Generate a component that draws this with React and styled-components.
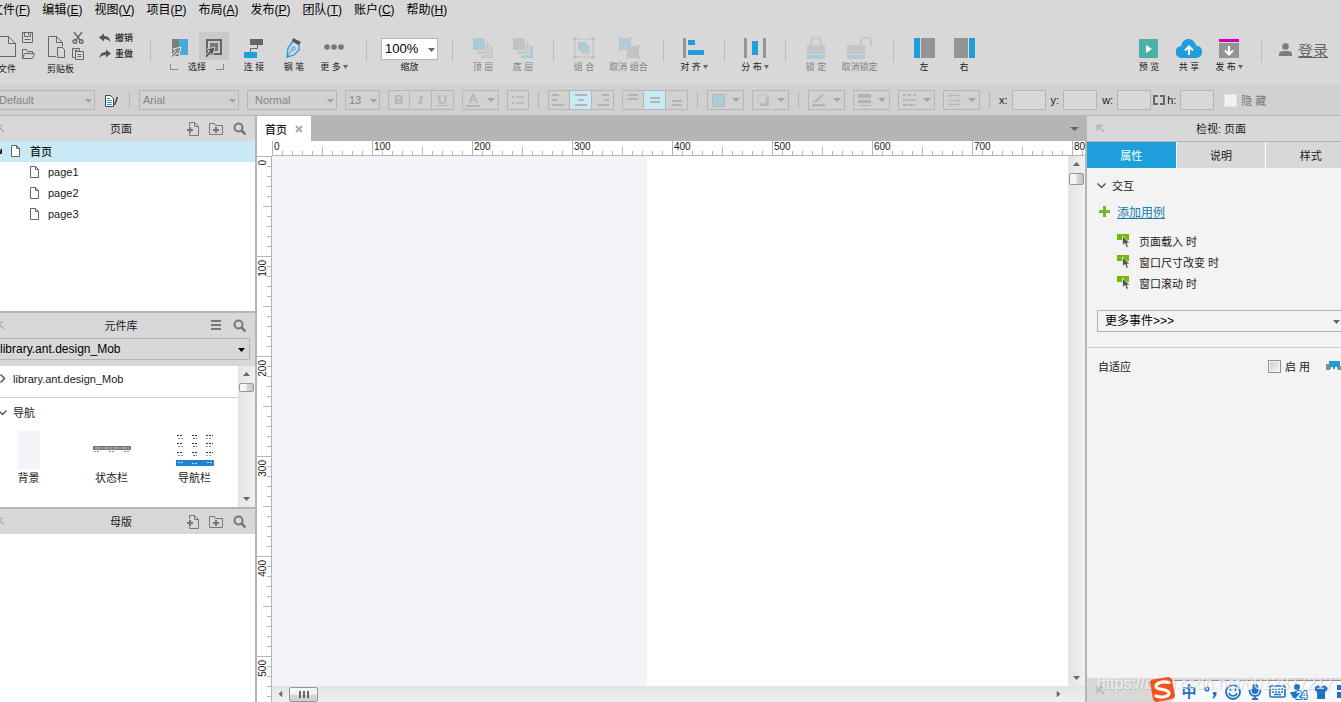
import { useLayoutEffect, useRef, useState } from "react"
import styled, { createGlobalStyle, css } from "styled-components"

const GlobalStyle = createGlobalStyle`
  * {
    box-sizing: border-box;
  }

  body {
    margin: 0;
    overflow: hidden;
    color: #1a1a1a;
    background: #d8d8d8;
    font-family: "Liberation Sans", "Noto Sans CJK SC", sans-serif;
    font-size: 11px;
  }

  button,
  input,
  select {
    margin: 0;
    padding: 0;
    border: 0;
    border-radius: 0;
    background: none;
    color: inherit;
    font: inherit;
  }

  svg {
    display: block;
    flex: none;
  }
`

const line = "#b5b5b5"
const blue = "#1e9fdb"
const grey = "#666"

const App = styled.div`
  display: flex;
  flex-direction: column;
  height: 100vh;
  overflow: hidden;
`

/* ---------- menu ---------- */

const MenuBar = styled.nav`
  display: flex;
  flex: none;
  gap: 12px;
  height: 20px;
  margin-left: -9px;
  font-size: 12px;
  line-height: 20px;
  color: #000;
`

const MenuItem = styled.button`
  white-space: nowrap;
`

/* ---------- main toolbar ---------- */

const Toolbar = styled.div`
  display: flex;
  flex: none;
  align-items: flex-start;
  height: 65px;
  padding-top: 12px;
  margin-left: -6px;
  font-size: 9px;
`

const Group = styled.div`
  display: flex;
  flex: none;
  padding: ${(p) => p.$pad || "0"};
`

const Divider = styled.div`
  flex: none;
  width: 1px;
  height: 22px;
  margin: 8px 10px 0;
  background: #bcbcbc;
`

const ToolButton = styled.button`
  display: flex;
  flex: none;
  flex-direction: column;
  align-items: center;
  width: ${(p) => p.$w || 40}px;
  line-height: 14px;
  white-space: nowrap;
  color: ${(p) => (p.disabled ? "#808080" : "#1a1a1a")};
`

const IconBox = styled.span`
  display: flex;
  align-items: center;
  justify-content: center;
  width: 30px;
  height: 28px;
  padding-top: 4px;
`

const ToolLabel = styled.span`
  display: flex;
  align-items: center;
  justify-content: ${(p) => (p.$spread ? "space-between" : "center")};
  gap: 2px;
  line-height: 14px;
  padding: ${(p) => (p.$spread ? "0 5px" : "0")};
`

const Cluster = styled.div`
  display: flex;
  flex-direction: column;
  gap: 2px;
  margin-right: ${(p) => p.$after}px;
  line-height: 14px;
`

const ClusterRow = styled.div`
  display: flex;
  align-items: center;
  gap: 6px;
  height: 28px;
`

const ClusterLabel = styled.span`
  padding-left: ${(p) => (p.$indent ? 4 : 0)}px;
`

const Stack = styled.div`
  display: flex;
  flex-direction: column;
  justify-content: space-between;
  height: 28px;
`

const HistoryButton = styled.button`
  display: flex;
  align-items: center;
  gap: 4px;
  height: 12px;
  line-height: 12px;
  font-weight: 500;
`

const ModeButton = styled.button`
  display: flex;
  align-items: center;
  justify-content: center;
  width: 30px;
  height: 28px;
  padding-top: 4px;
  background: ${(p) => (p.$active ? "#c9c9c9" : "none")};
`

const ModeRow = styled.div`
  display: flex;
  gap: 4px;
`

const ZoomBox = styled.label`
  display: flex;
  flex-direction: column;
  align-items: center;
  padding-top: 6px;
  line-height: 14px;
`

const Spacer = styled.div`
  flex: 1;
`

const Login = styled.a`
  display: flex;
  align-items: center;
  gap: 6px;
  height: 34px;
  padding: 0 13px 0 7px;
  font-size: 15px;
  color: ${grey};
`

/* ---------- selects ---------- */

const SelectWrap = styled.span`
  position: relative;
  display: block;
  flex: none;
  width: ${(p) => (p.$w ? `${p.$w}px` : "auto")};

  svg {
    position: absolute;
    right: ${(p) => p.$caretRight || 3}px;
    top: 50%;
    margin-top: -1px;
    pointer-events: none;
  }
`

const SelectField = styled.select`
  display: block;
  appearance: none;
  width: 100%;
  height: ${(p) => p.$h || 20}px;
  padding: 0 ${(p) => p.$pad || 3}px;
  border: 1px solid ${line};
  background: ${(p) => p.$bg || "transparent"};
  color: ${(p) => p.$color || "#000"};
  font-size: ${(p) => p.$size || 11}px;
`

const Caret = ({ color = "#666", w = 7 }) => (
  <svg width={w} height="4" viewBox="0 0 7 4" preserveAspectRatio="none">
    <path d="M0 0h7L3.5 4z" fill={color} />
  </svg>
)

function Select({ label, value, w, caret, caretRight, ...rest }) {
  return (
    <SelectWrap $w={w} $caretRight={caretRight}>
      <SelectField aria-label={label} defaultValue={value} {...rest}>
        <option>{value}</option>
      </SelectField>
      <Caret color={caret} />
    </SelectWrap>
  )
}

/* ---------- format bar ---------- */

const FormatBar = styled.div`
  display: flex;
  flex: none;
  align-items: center;
  gap: 8px;
  height: 31px;
  padding-right: 8px;
  margin-left: -8px;
  background: #d1d1d1;
  border-bottom: 1px solid ${line};
`

const FormatDivider = styled.div`
  flex: none;
  width: 1px;
  height: 18px;
  margin: 0 1px;
  background: ${line};
`

const SegButton = styled.button`
  display: flex;
  align-items: center;
  justify-content: space-around;
  width: ${(p) => p.$w || 20}px;
  height: 18px;
  background: ${(p) => (p.$active ? "#c9e9f6" : "transparent")};
`

const Segments = styled.div`
  display: flex;
  flex: none;
  border: 1px solid ${line};

  ${SegButton} + ${SegButton} {
    width: 22px;
    border-left: 1px solid ${line};
  }
`

const StyleButton = styled.button`
  padding: 0 2px;
`

const Coord = styled.label`
  display: flex;
  flex: none;
  align-items: center;
  gap: 4px;
  font-size: 11px;

  input {
    width: 34px;
    height: 20px;
    border: 1px solid ${line};
    background: #d8d8d8;
  }
`

const Coords = styled.div`
  display: flex;
  align-items: center;
  gap: ${(p) => p.$gap}px;
`

const Check = styled.label`
  display: flex;
  align-items: center;
  gap: 4px;
  padding-left: ${(p) => (p.$muted ? 2 : 0)}px;
  font-size: 11px;
  color: ${(p) => (p.$muted ? "#777" : "#1a1a1a")};

  input {
    appearance: none;
    width: 13px;
    height: 13px;
    border: 1px solid ${(p) => (p.$muted ? "#e2e2e2" : "#8e8f8f")};
    background: ${(p) =>
      p.$muted ? "#f2f2f2" : "linear-gradient(135deg, #c8ccd4, #f6f6f6)"};
    box-shadow: inset 0 0 0 1px #f4f4f4;
  }
`

/* ---------- body ---------- */

const Body = styled.main`
  display: flex;
  flex: 1;
  min-height: 0;
`

const LeftDock = styled.aside`
  display: flex;
  flex: none;
  flex-direction: column;
  width: 270px;
  margin-left: -13px;
  border-right: 2px solid ${line};
  background: #fff;
`

const Panel = styled.section`
  display: flex;
  flex-direction: column;
  flex: ${(p) => (p.$h ? "none" : "1")};
  height: ${(p) => (p.$h ? `${p.$h}px` : "auto")};
  border-bottom: ${(p) => (p.$h ? `2px solid ${line}` : "0")};
`

const PanelHeader = styled.header`
  display: grid;
  flex: none;
  grid-template-columns: 1fr auto 1fr;
  align-items: center;
  height: 25px;
  padding: 0 9px;
  background: #d8d8d8;
  line-height: 16px;
`

const HeaderTools = styled.div`
  display: flex;
  justify-content: flex-end;
  gap: 10px;
`

const Tree = styled.ul`
  margin: 0;
  padding: 0;
  list-style: none;
`

const TreeRow = styled.li`
  display: flex;
  align-items: center;
  gap: ${(p) => (p.$root ? 9 : 8)}px;
  height: 21px;
  padding: 0 0 2px ${(p) => (p.$root ? 10 : 43)}px;
  font-weight: ${(p) => (p.$root ? 500 : 400)};
  background: ${(p) => (p.$root ? "#c9e9f6" : "#fff")};
`

const LibrarySelect = styled.div`
  padding: 0 5px 6px 11px;
  background: #d8d8d8;
`

const LibraryBody = styled.div`
  display: flex;
  flex: 1;
  min-height: 0;
`

const LibraryList = styled.div`
  flex: 1;
`

const Folder = styled.div`
  display: flex;
  align-items: center;
  gap: 6px;
  height: ${(p) => (p.$closed ? 32 : 28)}px;
  padding: 0 0 ${(p) => (p.$closed ? 6 : 0)}px 11px;
  border-bottom: ${(p) => (p.$closed ? "1px solid #d0d0d0" : "0")};
`

const Thumbs = styled.div`
  display: grid;
  grid-template-columns: repeat(3, 83px);
  padding-top: 5px;
`

const Thumb = styled.figure`
  display: flex;
  flex-direction: column;
  align-items: center;
  gap: 1px;
  margin: 0;
  line-height: 16px;
`

/* ---------- scrollbars ---------- */

const VScroll = styled.div`
  display: flex;
  flex: none;
  flex-direction: column;
  align-items: center;
  width: 17px;
  padding: 6px 0;
  background: linear-gradient(90deg, #e4e4e4, #f0f0f0);
`

const HScroll = styled.div`
  display: flex;
  flex: none;
  align-items: center;
  height: 16px;
  padding: 0 23px 0 5px;
  background: linear-gradient(#e4e4e4, #f0f0f0);
`

const Thumbpiece = styled.div`
  display: flex;
  align-items: center;
  justify-content: center;
  gap: 2px;
  width: ${(p) => p.$w}px;
  height: ${(p) => p.$h}px;
  margin: ${(p) => p.$margin};
  border: 1px solid #979797;
  border-radius: 2px;
  background: ${(p) =>
    p.$w > 20
      ? "linear-gradient(#f5f5f5 45%, #d6d6d6 55%, #cfcfcf)"
      : "linear-gradient(90deg, #f5f5f5 45%, #d6d6d6 55%, #c4c6cc)"};

  i {
    width: 2px;
    height: 7px;
    background: #666;
  }
`

const Arrow = ({ turn }) => (
  <svg width="7" height="4" viewBox="0 0 7 4" transform={`rotate(${turn})`}>
    <path d="M0 4 3.5 0 7 4z" fill="#666" />
  </svg>
)

/* ---------- canvas ---------- */

const Workspace = styled.section`
  display: flex;
  flex: 1;
  flex-direction: column;
  min-width: 0;
  background: #fff;
`

const TabStrip = styled.div`
  display: flex;
  flex: none;
  align-items: center;
  justify-content: space-between;
  height: 25px;
  padding-right: 6px;
  background: ${line};
`

const PageTab = styled.button`
  display: flex;
  align-items: center;
  gap: 8px;
  height: 25px;
  padding: 0 8px;
  background: #fff;
  font-weight: 500;
`

const ticks = (dir) => css`
  background-image: linear-gradient(${dir}, #b5b5b5, #b5b5b5),
    linear-gradient(${dir}, #b5b5b5, #b5b5b5),
    repeating-linear-gradient(${dir}, #b5b5b5 0 1px, transparent 1px 10px);
  background-repeat: no-repeat;
`

const TopRuler = styled.div`
  display: flex;
  flex: none;
  height: 15px;
  margin-left: 15px;
  overflow: hidden;
  border-bottom: 1px solid ${line};
`

const TopSegment = styled.div`
  ${ticks("90deg")}
  flex: none;
  width: 100px;
  padding-left: 2px;
  font-size: 10px;
  line-height: 12px;
  background-size: 1px 14px, 1px 8px, 100px 4px;
  background-position: 0 0, 50px 6px, 0 10px;
`

const SideRuler = styled.div`
  flex: none;
  width: 15px;
  overflow: hidden;
  border-right: 1px solid ${line};
`

const SideSegment = styled.div`
  ${ticks("180deg")}
  height: 100px;
  padding-top: 4px;
  background-size: 14px 1px, 8px 1px, 4px 100px;
  background-position: 0 0, 6px 50px, 10px 0;

  span {
    display: block;
    writing-mode: vertical-rl;
    transform: rotate(180deg);
    width: 12px;
    font-size: 10px;
    line-height: 12px;
    text-align: right;
  }
`

const CanvasRow = styled.div`
  display: flex;
  flex: 1;
  min-height: 0;
`

const CanvasColumn = styled.div`
  display: flex;
  flex: 1;
  flex-direction: column;
  min-width: 0;
`

const CanvasView = styled.div`
  display: flex;
  flex: 1;
  min-height: 0;
`

const Sheet = styled.div`
  flex: 1;
  background: #fff;

  div {
    width: 375px;
    height: 100%;
    background: #f4f3f9;
  }
`

/* ---------- inspector ---------- */

const Inspector = styled.aside`
  position: relative;
  display: flex;
  flex: none;
  flex-direction: column;
  width: 256px;
  overflow: hidden;
  border-left: 2px solid ${line};
  background: #f3f3f3;
`

const Wide = styled.div`
  display: flex;
  flex: 1;
  flex-direction: column;
  margin-right: -14px;
`

const Tabs = styled.div`
  display: grid;
  grid-template-columns: repeat(3, 1fr);
  gap: 1px;
  height: 27px;
  border-top: 1px solid ${line};
  background: #fff;
`

const Tab = styled.button`
  color: ${(p) => (p.$active ? "#fff" : "#1a1a1a")};
  background: ${(p) => (p.$active ? blue : "#d8d8d8")};
`

const Interactions = styled.div`
  padding: 9px 0 15px 10px;
  border-bottom: 1px solid #cfcfcf;
`

const SectionTitle = styled.div`
  display: flex;
  align-items: center;
  gap: 6px;
  height: 16px;
`

const AddCase = styled.div`
  display: flex;
  align-items: center;
  gap: 7px;
  height: 20px;
  margin: 8px 0 9px 2px;
  font-size: 12px;

  a {
    color: #1580b0;
  }
`

const EventList = styled.ul`
  margin: 0 0 17px;
  padding: 0 0 0 20px;
  list-style: none;

  li {
    display: flex;
    align-items: center;
    gap: 9px;
    height: 21px;
  }
`

const Adaptive = styled.div`
  display: flex;
  align-items: center;
  justify-content: space-between;
  height: 36px;
  padding: 0 9px 0 11px;
`

const AdaptiveTools = styled.div`
  display: flex;
  align-items: center;
  gap: 16px;
`

const Outline = styled.footer`
  display: flex;
  align-items: center;
  height: 24px;
  margin-top: auto;
  padding-left: 9px;
  background: #d8d8d8;
`

const ImeBar = styled.div`
  position: absolute;
  right: 0;
  bottom: 0;
  left: 62px;
  display: flex;
  align-items: flex-end;
  overflow: hidden;
`

const ImeLogo = styled.button`
  position: relative;
  z-index: 1;
`

const ImeTools = styled.div`
  display: flex;
  flex: 1;
  height: 22px;
  margin-left: -6px;
  padding-left: 7px;
  border-top: 1px solid #8d8d9c;
  background: #fafafc;
  color: #1f74c8;
  overflow: hidden;
`

const ImeButton = styled.button`
  display: flex;
  flex: none;
  align-items: center;
  justify-content: center;
  width: 22px;
  height: 21px;
  font-size: 15px;
  font-weight: 700;
  line-height: 20px;
`

const Watermark = styled.div`
  position: absolute;
  left: 10px;
  bottom: 8px;
  font-size: 16px;
  line-height: 20px;
  white-space: nowrap;
  color: rgba(255, 255, 255, 0.7);
  text-shadow: 1px 1px 1px rgba(120, 120, 120, 0.3);
  pointer-events: none;
`

/* ---------- icons ---------- */

const Svg = ({ w, h = w, children, ...rest }) => (
  <svg width={w} height={h} viewBox={`0 0 ${w} ${h}`} fill="none" {...rest}>
    {children}
  </svg>
)

const NewFileIcon = () => (
  <Svg w={22} h={24} stroke={grey}>
    <path d="M.5 2.500h14l7 7v13H.5zM14.500 2.500v7h7" />
  </Svg>
)

const SaveIcon = () => (
  <Svg w={13} h={12} stroke={grey}>
    <path d="M.5.5h10v10H.5zM2.500.500v4h6v-4M2.500 7.500h6M6.500 1v2" />
  </Svg>
)

const OpenIcon = () => (
  <Svg w={13} h={12} stroke={grey}>
    <path d="M.5 10.500v-9h4l1 2h5v2M.5 10.500l2-5h10l-2 5z" />
  </Svg>
)

const PasteIcon = () => (
  <Svg w={19} h={24} stroke={grey}>
    <path d="M9 22.500H1.500v-20h8l6 6v4M9.500 2.500v6h6" />
    <path d="M10.500 13.500h5l2 2v8h-7z" />
  </Svg>
)

const CutIcon = () => (
  <Svg w={12} stroke={grey} strokeWidth="1.400">
    <path d="m2 0 6 8M10 0 4 8" />
    <circle cx="2.800" cy="9.500" r="1.800" />
    <circle cx="9.200" cy="9.500" r="1.800" />
  </Svg>
)

const CopyIcon = () => (
  <Svg w={12} stroke={grey}>
    <path d="M4 9.500H.5v-9h7V3M3.500 3.500h8v8h-8zM5.500 6.500h4M5.500 8.500h4M2.500 2.500h3" />
  </Svg>
)

const UndoIcon = ({ flip }) => (
  <Svg w={12} h={10}>
    <path
      d={
        flip
          ? "M12 4.500 7 .5V3C3 3 1 5 .5 9 2 7 4 6 7 6v2.500z"
          : "M0 4.500 5 .5V3c4 0 6 2 6.500 6C10 7 8 6 5 6v2.500z"
      }
      fill="#555"
    />
  </Svg>
)

const Pointer = ({ light }) => (
  <path
    d="m0 17 4.500-5L2 10l8-2-2 8-2-2-4.500 5z"
    fill={light ? "#888" : "#555"}
    stroke={light ? "#e4e4e4" : "#c9c9c9"}
    strokeWidth="1"
  />
)

const SelectModeIcon = () => (
  <Svg w={18} h={19}>
    <path d="M1 0h7v17H1z" fill="#7d7d7d" />
    <path d="M8 0h9v16H8z" fill="#45abdc" />
    <Pointer light />
  </Svg>
)

const ContainModeIcon = () => (
  <Svg w={18} h={19}>
    <path d="M2 1h14v14H2z" stroke="#666" strokeWidth="2" />
    <path d="M5 4h8v8H5z" fill="#777" />
    <Pointer />
  </Svg>
)

const ConnectIcon = () => (
  <Svg w={20} h={20}>
    <path d="M13.500 6v4.500h-7V14" stroke={grey} />
    <path d="M6 1h13v6H6z" fill={grey} />
    <path d="M0 14h13v6H0z" fill={blue} />
  </Svg>
)

const PenIcon = () => (
  <Svg w={18} h={20}>
    <path d="m8 3 6 4v5L9 17l-7 2 1-9z" stroke={blue} strokeWidth="1.300" />
    <path d="m2 19 5-7" stroke={blue} />
    <circle cx="8.500" cy="10.500" r="1.600" stroke={blue} />
    <path d="m8 0 8 4-2 3-7-4z" fill="#555" />
  </Svg>
)

const MoreIcon = () => (
  <Svg w={20} h={18}>
    <circle cx="3" cy="8" r="2.800" fill="#777" />
    <circle cx="10" cy="8" r="2.800" fill="#777" />
    <circle cx="17" cy="8" r="2.800" fill="#777" />
  </Svg>
)

const LayerIcon = ({ front }) => (
  <Svg w={20}>
    <path d="M0 0h12v12H0z" fill={front ? "#abcbd8" : "#c3c3c3"} />
    <path d="M13 4h3v12H4v-3h9z" fill="#c8c8c8" />
    <path d="M17 8h3v12H8v-3h9z" fill={front ? "#c8c8c8" : "#abcbd8"} />
  </Svg>
)

const dots = (points, r = 1.8) =>
  points.map(([x, y]) => (
    <circle key={`${x}-${y}`} cx={x} cy={y} r={r} fill="#bdbdbd" />
  ))

const GroupIcon = () => (
  <Svg w={22}>
    <path d="M2 2h18v18H2z" stroke="#c0c0c0" />
    <path d="M8 8h9v9H8z" fill="#c8c8c8" />
    <path d="M5 5h9v9H5z" fill="#abcbd8" />
    {dots([[2, 2], [20, 2], [2, 20], [20, 20]])}
  </Svg>
)

const UngroupIcon = () => (
  <Svg w={22}>
    <path d="M9 9h12v12H9z" fill="#c3c3c3" />
    <path d="M1 1h12v12H1z" fill="#b4cad6" />
    {dots([[1, 1], [13, 1], [1, 13], [13, 13], [21, 9], [9, 21], [21, 21]], 1)}
  </Svg>
)

const AlignIcon = () => (
  <Svg w={24} h={20}>
    <path d="M1 0h3v20H1z" fill="#949494" />
    <path d="M6 2h7v5H6zM6 12h16v5H6z" fill={blue} />
  </Svg>
)

const DistributeIcon = () => (
  <Svg w={22} h={20}>
    <path d="M0 0h3v20H0zM19 0h3v20h-3z" fill="#949494" />
    <path d="M8 3h6v14H8z" fill={blue} />
  </Svg>
)

const LockIcon = ({ open }) => (
  <Svg w={open ? 26 : 18} h={22}>
    <path
      d={open ? "M14 8V5.500a5 5 0 0 1 10 0V9" : "M4 8V5.500a5 5 0 0 1 10 0V8"}
      stroke="#c6c6c6"
      strokeWidth="2.400"
    />
    <path d="M0 8h18v9H0z" fill="#c6c6c6" />
    <path d="M0 18h18v4H0z" fill="#b0ccd8" />
  </Svg>
)

const DockIcon = ({ right }) => (
  <Svg w={21} h={20}>
    <path d={right ? "M0 0h14v20H0z" : "M7 0h14v20H7z"} fill="#949494" />
    <path d={right ? "M15 0h6v20h-6z" : "M0 0h6v20H0z"} fill={blue} />
  </Svg>
)

const PreviewIcon = () => (
  <Svg w={19}>
    <path d="M0 0h19v19H0z" fill="#4bb0a7" />
    <path d="m7 6 6 4-6 4z" fill="#fff" />
  </Svg>
)

const ShareIcon = () => (
  <Svg w={26} h={19}>
    <path
      d="M6 19a6 6 0 0 1-1-12C6 2.500 9 0 12.500 0S19 2.500 20 6.500A6.200 6.200 0 0 1 20 19z"
      fill={blue}
    />
    <path d="M13 16V9M9 11.500 13 7.500l4 4" stroke="#fff" strokeWidth="2" />
  </Svg>
)

const PublishIcon = () => (
  <Svg w={20} h={19}>
    <path d="M0 0h20v3H0z" fill="#d400b4" />
    <path d="M0 4h20v15H0z" fill="#949494" />
    <path d="M10 7v8M6 11.500l4 4 4-4" stroke="#fff" strokeWidth="2" />
  </Svg>
)

const UserIcon = () => (
  <Svg w={13} h={13}>
    <circle cx="6.500" cy="3.500" r="3.300" fill="#7c7c7c" />
    <path d="M0 13v-2c0-2 2-3 4-3h5c2 0 4 1 4 3v2z" fill="#7c7c7c" />
  </Svg>
)

const Corner = ({ right }) => (
  <Svg w={8} h={7}>
    <path d={right ? "M7.500 0v5.500H0" : "M.5 0v5.500H8"} stroke="#888" />
  </Svg>
)

const StylesIcon = () => (
  <Svg w={13} h={13}>
    <path d="M.5 1.500h5l3 3v8h-8z" fill="#fff" stroke="#444" />
    <path d="M2 4.500h3M2 6.500h5M2 8.500h5M2 10.500h5" stroke={blue} />
    <path d="m12.500 3-3 8" stroke="#555" strokeWidth="1.800" />
  </Svg>
)

/* horizontal strokes given as [x, y, width, color] */
const Bars = ({ items, w = 14, h = 14, color = "#b4b4b4", weight = 1 }) => (
  <Svg w={w} h={h}>
    {items.map(([x, y, len, c]) => (
      <path key={`${x}-${y}`} d={`M${x} ${y}h${len}`} stroke={c || color} strokeWidth={weight} />
    ))}
  </Svg>
)

const GlyphIcon = styled.span`
  width: 14px;
  font-family: ${(p) =>
    p.$serif ? '"Liberation Serif", serif' : '"Liberation Sans", sans-serif'};
  font-size: 13px;
  font-weight: 700;
  font-style: ${(p) => (p.$serif ? "italic" : "normal")};
  line-height: ${(p) => (p.$rule ? 12 : 14)}px;
  text-align: center;
  color: #b4b4b4;
  border-bottom: ${(p) => (p.$rule ? "2px solid #b4b4b4" : "0")};
`

const FillIcon = () => (
  <Svg w={13} h={13}>
    <path d="M.5.5h12v12H.5z" fill="#abcbd8" stroke="#b8b8b8" />
  </Svg>
)

const ShadowIcon = () => (
  <Svg w={13} h={13}>
    <path d="M3 3h9v9H3z" fill="#b9b9b9" />
    <path d="M1 1h8v8H1z" fill="#d1d1d1" stroke="#c4c4c4" />
  </Svg>
)

const BrushIcon = () => (
  <Svg w={14} h={14}>
    <path d="M0 11h13v2.500H0z" fill="#b4b4b4" />
    <path d="M3 9 11 1.500" stroke="#b4b4b4" strokeWidth="2" />
    <path d="m1 10 1-3 2 2z" fill="#b4b4b4" />
  </Svg>
)

const WeightIcon = () => (
  <Svg w={13} h={14}>
    <path d="M0 1h13v4H0zM0 7h13v3H0zM0 12h13v1H0z" fill="#b4b4b4" />
  </Svg>
)

const DashIcon = () => (
  <Svg w={13} h={14} stroke="#b4b4b4">
    <path d="M0 2h13" strokeDasharray="3 2" strokeWidth="2" />
    <path d="M0 7h13" strokeDasharray="2 1" strokeWidth="2" />
    <path d="M0 12h13" strokeDasharray="5 1" strokeWidth="2" />
  </Svg>
)

const ArrowsIcon = () => (
  <Svg w={13} h={14} stroke="#b4b4b4">
    <path d="M0 2.500h12M0 7.500h12M0 11.500h12M3 .5l-2 2 2 2M10 5.500l2 2-2 2M3 9.500l-2 2 2 2" />
  </Svg>
)

const LinkIcon = () => (
  <Svg w={12} h={10} stroke={grey} strokeWidth="2">
    <path d="M5 1H1v8h4M7 1h4v8H7" />
  </Svg>
)

const CollapseIcon = () => (
  <Svg w={9} h={9} stroke="#b3b3b3" strokeWidth="1.600">
    <path d="M1.500 7V1.500H7M2 2l6 6" />
  </Svg>
)

const AddPageIcon = () => (
  <Svg w={13} h={14} stroke="#777">
    <path d="M3.500 4V.5h5l4 4v9h-9v-2M8.500.5v4h4" />
    <path d="M1 8h6M4 5v6" strokeWidth="2" />
  </Svg>
)

const AddFolderIcon = () => (
  <Svg w={14} h={13} stroke="#777">
    <path d="M.5 12.500v-11h5l1 2h7v9z" />
    <path d="M4 8h6M7 5v6" strokeWidth="2" />
  </Svg>
)

const SearchIcon = () => (
  <Svg w={13} h={13} stroke="#777" strokeWidth="2">
    <circle cx="5.500" cy="5.500" r="4" />
    <path d="m8.500 8.500 4 4" strokeWidth="2.500" />
  </Svg>
)

const MenuIcon = () => (
  <Bars w={13} h={11} color="#777" weight={2} items={[[1, 1, 10], [1, 5, 10], [1, 9, 10]]} />
)

const PageIcon = () => (
  <Svg w={10} h={12} stroke="#666">
    <path d="M.5.5h5l3 3v8h-8zM5.500.5v3h3" fill="#fff" />
  </Svg>
)

const Chevron = ({ open }) => (
  <Svg w={9} h={9} stroke="#555" strokeWidth="1.500">
    <path d={open ? "m.5 2.500 4 4 4-4" : "m2.500.5 4 4-4 4"} />
  </Svg>
)

const PlusIcon = () => (
  <Svg w={11} stroke="#76b82a" strokeWidth="3">
    <path d="M0 5.500h11M5.500 0v11" />
  </Svg>
)

const EventIcon = () => (
  <Svg w={13} h={14}>
    <path d="M0 0h12v6H0z" fill="#6fba00" />
    <path
      d="M5.500 2v9.500L8 9.500l1.500 4 2-1L10 9h3z"
      fill="#555"
      stroke="#f3f3f3"
      strokeWidth=".8"
    />
  </Svg>
)

const DevicesIcon = () => (
  <Svg w={20} h={10}>
    <path d="M3 0h11v8H3z" fill={blue} />
    <path d="M0 3h4v6H0zM12 5h6v4h-6z" fill="#8a8a8a" />
    <path d="M5 6h2v2H5zM9 6h2v2H9z" fill="#fff" />
  </Svg>
)

const BackgroundThumb = () => (
  <Svg w={22} h={38}>
    <path d="M0 0h22v38H0z" fill="#f4f3f9" />
  </Svg>
)

const StatusThumb = () => (
  <Svg w={38} h={38}>
    <path d="M0 15h38v4H0z" fill="#777" />
    <path d="M2 17h34" stroke="#ccc" strokeDasharray="5 1 2 1" />
    <path d="M1 20.500h6M16 20.500h5M31 20.500h6" stroke="#888" strokeDasharray="2 1" />
  </Svg>
)

const NavThumb = () => (
  <Svg w={38} h={38}>
    {[4, 12, 21].map((y) => (
      <g key={y} strokeDasharray="2 1">
        <path d={`M1 ${y + 0.5}h6M16 ${y + 0.5}h6M30 ${y + 0.5}h7`} stroke="#333" />
        <path d={`M2 ${y + 3.5}h5M30 ${y + 3.5}h6`} stroke="#6aaede" />
        <path d={`M17 ${y + 3.5}h4`} stroke="#666" />
      </g>
    ))}
    <path d="M0 29h38v6H0z" fill="#1c84d0" />
    <path d="M2 31.500h5M16 32.500h6M31 31.500h5" stroke="#bfe0f5" strokeDasharray="2 1" />
  </Svg>
)

const SogouLogo = () => (
  <Svg w={28} h={25}>
    <path d="M1 5Q1 3 4 2.500L19 0q3 0 4 3l3 15q0 3-3 4L8 25q-3 0-4-3z" fill="#f4511e" />
    <path
      d="M20 5.500C13 4 7 6 7 9.500c0 4 13 2 13 6.500 0 4-8 5-13 3"
      stroke="#fff"
      strokeWidth="3.200"
      strokeLinecap="round"
    />
  </Svg>
)

const PunctIcon = () => (
  <Svg w={14} h={16}>
    <circle cx="3" cy="5" r="1.800" stroke="currentColor" strokeWidth="1.500" />
    <path d="M9 8h3.500v3L10 14.500H8.500L10 11H9z" fill="currentColor" />
  </Svg>
)

const SmileIcon = () => (
  <Svg w={16} stroke="currentColor" strokeWidth="1.800">
    <circle cx="8" cy="8" r="7" />
    <path d="M4 9c1 4 7 4 8 0M5.500 4.500v2.500M10.500 4.500v2.500" strokeWidth="1.500" />
  </Svg>
)

const MicIcon = () => (
  <Svg w={14} h={16} stroke="currentColor" strokeWidth="1.800">
    <rect x="4.500" y="1" width="5" height="8" rx="2.500" fill="currentColor" />
    <path d="M1.500 6c0 8 11 8 11 0M7 12v3M4 15h6" />
  </Svg>
)

const KeyboardIcon = () => (
  <Svg w={17} h={13} stroke="currentColor" strokeWidth="1.600">
    <rect x="1" y="1" width="15" height="11" rx="1" />
    <path d="M3 4h11M3 7h11" strokeDasharray="2 1" />
    <path d="M5 9.500h7" />
  </Svg>
)

const PersonIcon = () => (
  <Svg w={18} h={17}>
    <circle cx="7" cy="4" r="3" fill="currentColor" />
    <path d="M0 9h3l3-1h4l3 3v4H3z" fill="currentColor" />
    <text
      x="6"
      y="16"
      fontSize="10"
      fill="#fff"
      stroke="#1f74c8"
      strokeWidth="2"
      paintOrder="stroke"
    >
      24
    </text>
  </Svg>
)

const ShirtIcon = () => (
  <Svg w={14} h={14}>
    <path d="M4 0c1 2 5 2 6 0l4 3-2 4-1-1v8H3V6L2 7 0 3z" fill="currentColor" />
  </Svg>
)

const GridIcon = () => (
  <Svg w={13} h={13}>
    <path d="M0 0h6v5H0zM7 0h6v5H7zM0 7h6v6H0zM7 7h6v6H7z" fill="currentColor" />
  </Svg>
)

/* ---------- data ---------- */

const menus = [
  ["文件", "F"],
  ["编辑", "E"],
  ["视图", "V"],
  ["项目", "P"],
  ["布局", "A"],
  ["发布", "P"],
  ["团队", "T"],
  ["账户", "C"],
  ["帮助", "H"],
]

const arrangeGroups = [
  [
    { label: "顶 层", icon: <LayerIcon front />, disabled: true },
    { label: "底 层", icon: <LayerIcon />, disabled: true },
  ],
  [
    { label: "组 合", icon: <GroupIcon />, disabled: true },
    { label: "取消 组合", icon: <UngroupIcon />, disabled: true, w: 49 },
  ],
  [{ label: "对 齐", icon: <AlignIcon />, more: true }],
  [{ label: "分 布", icon: <DistributeIcon />, more: true }],
  [
    { label: "锁 定", icon: <LockIcon />, disabled: true },
    { label: "取消锁定", icon: <LockIcon open />, disabled: true, w: 47 },
  ],
  [
    { label: "左", icon: <DockIcon /> },
    { label: "右", icon: <DockIcon right /> },
  ],
]

const hAlign = [
  [[0, 2, 7], [0, 7, 5], [0, 12, 12]],
  [[1, 2, 12], [4, 7, 6], [1, 12, 12]],
  [[6, 2, 7], [8, 7, 5], [1, 12, 12]],
]

const vAlign = [
  [[2, 2, 10], [2, 6, 10]],
  [[2, 5, 10], [2, 9, 10]],
  [[2, 8, 10], [2, 12, 10]],
]

const Tool = ({ label, icon, more, disabled, w }) => (
  <ToolButton disabled={disabled} $w={w}>
    <IconBox>{icon}</IconBox>
    <ToolLabel>
      {label}
      {more && <Caret w={5} />}
    </ToolLabel>
  </ToolButton>
)

const DropTool = ({ label, children }) => (
  <Segments>
    <SegButton $w={35} aria-label={label}>
      {children}
      <Caret color="#a2a2a2" w={8} />
    </SegButton>
  </Segments>
)

function MainToolbar() {
  return (
    <Toolbar>
      <Cluster $after={12}>
        <ClusterRow>
          <button aria-label="新建"><NewFileIcon /></button>
          <Stack>
            <button aria-label="保存"><SaveIcon /></button>
            <button aria-label="打开"><OpenIcon /></button>
          </Stack>
        </ClusterRow>
        <ClusterLabel $indent>文件</ClusterLabel>
      </Cluster>
      <Cluster $after={15}>
        <ClusterRow>
          <button aria-label="粘贴"><PasteIcon /></button>
          <Stack>
            <button aria-label="剪切"><CutIcon /></button>
            <button aria-label="复制"><CopyIcon /></button>
          </Stack>
        </ClusterRow>
        <ClusterLabel>剪贴板</ClusterLabel>
      </Cluster>
      <Group $pad="0 7px 0 0">
        <Stack>
          <HistoryButton><UndoIcon />撤销</HistoryButton>
          <HistoryButton><UndoIcon flip />重做</HistoryButton>
        </Stack>
      </Group>
      <Divider />
      <Group $pad="0 5px 0 4px">
        <div>
          <ModeRow>
            <ModeButton aria-label="相交选中"><SelectModeIcon /></ModeButton>
            <ModeButton aria-label="包含选中" $active><ContainModeIcon /></ModeButton>
          </ModeRow>
          <ToolLabel $spread>
            <Corner />
            选择
            <Corner right />
          </ToolLabel>
        </div>
      </Group>
      <Group $pad="0 2px 0 0">
        <Tool label="连 接" icon={<ConnectIcon />} />
        <Tool label="钢 笔" icon={<PenIcon />} />
        <Tool label="更 多" icon={<MoreIcon />} more />
      </Group>
      <Divider />
      <Group $pad="0 4px">
        <ZoomBox>
          <Select label="缩放" value="100%" w={57} $h={22} $size={13} $bg="#fff" />
          缩放
        </ZoomBox>
      </Group>
      {arrangeGroups.map((tools) => [
        <Divider key={`${tools[0].label}-line`} />,
        <Group key={tools[0].label}>
          {tools.map((tool) => (
            <Tool key={tool.label} {...tool} />
          ))}
        </Group>,
      ])}
      <Spacer />
      <Group $pad="0 2px 0 0">
        <Tool label="预 览" icon={<PreviewIcon />} />
        <Tool label="共 享" icon={<ShareIcon />} />
        <Tool label="发 布" icon={<PublishIcon />} more />
      </Group>
      <Divider />
      <Login href="#login">
        <UserIcon />
        登录
      </Login>
    </Toolbar>
  )
}

function Formatting() {
  const muted = { $color: "#858585", caret: "#a2a2a2" }
  return (
    <FormatBar>
      <Select label="样式" value="Default" w={103} $pad={6} {...muted} />
      <StyleButton aria-label="样式管理"><StylesIcon /></StyleButton>
      <FormatDivider />
      <Select label="字体" value="Arial" w={100} {...muted} />
      <Select label="字形" value="Normal" w={90} $pad={7} {...muted} />
      <Select label="字号" value="13" w={35} {...muted} />
      <Segments>
        <SegButton aria-label="粗体"><GlyphIcon>B</GlyphIcon></SegButton>
        <SegButton aria-label="斜体"><GlyphIcon $serif>I</GlyphIcon></SegButton>
        <SegButton aria-label="下划线">
          <GlyphIcon as="u">U</GlyphIcon>
        </SegButton>
      </Segments>
      <DropTool label="文字颜色"><GlyphIcon $rule>A</GlyphIcon></DropTool>
      <Segments>
        <SegButton aria-label="项目符号">
          <Bars
            weight={2}
            color="#bcbcbc"
            items={[[1, 4, 2, "#9cc3d4"], [5, 4, 8], [1, 10, 2, "#9cc3d4"], [5, 10, 8]]}
          />
        </SegButton>
      </Segments>
      <FormatDivider />
      <Segments>
        {hAlign.map((items, i) => (
          <SegButton key={i} aria-label={["左对齐", "居中", "右对齐"][i]} $active={i === 1}>
            <Bars items={items} weight={2} />
          </SegButton>
        ))}
      </Segments>
      <Segments>
        {vAlign.map((items, i) => (
          <SegButton key={i} aria-label={["顶部", "中部", "底部"][i]} $active={i === 1}>
            <Bars items={items} weight={2} />
          </SegButton>
        ))}
      </Segments>
      <FormatDivider />
      <DropTool label="填充"><FillIcon /></DropTool>
      <DropTool label="阴影"><ShadowIcon /></DropTool>
      <FormatDivider />
      <DropTool label="线条颜色"><BrushIcon /></DropTool>
      <DropTool label="线宽"><WeightIcon /></DropTool>
      <DropTool label="线型"><DashIcon /></DropTool>
      <DropTool label="箭头"><ArrowsIcon /></DropTool>
      <FormatDivider />
      <Coords $gap={2}>
        <Coords $gap={5}>
          <Coord>x: <input /></Coord>
          <Coord>y: <input /></Coord>
          <Coord>w: <input /></Coord>
        </Coords>
        <LinkIcon />
        <Coord>h: <input /></Coord>
      </Coords>
      <Check $muted>
        <input type="checkbox" disabled />
        隐 藏
      </Check>
    </FormatBar>
  )
}

const Header = ({ title, children }) => (
  <PanelHeader>
    <CollapseIcon />
    {title}
    <HeaderTools>{children}</HeaderTools>
  </PanelHeader>
)

const AddTools = () => (
  <>
    <button aria-label="添加页面"><AddPageIcon /></button>
    <button aria-label="添加文件夹"><AddFolderIcon /></button>
    <button aria-label="搜索"><SearchIcon /></button>
  </>
)

function Left() {
  return (
    <LeftDock>
      <Panel $h={197}>
        <Header title="页面"><AddTools /></Header>
        <Tree>
          <TreeRow $root>
            <Svg w={5} h={6}><path d="M5 0v6H0z" fill="#222" /></Svg>
            <PageIcon />
            首页
          </TreeRow>
          {["page1", "page2", "page3"].map((name) => (
            <TreeRow key={name}>
              <PageIcon />
              {name}
            </TreeRow>
          ))}
        </Tree>
      </Panel>
      <Panel $h={196}>
        <Header title="元件库">
          <button aria-label="选项"><MenuIcon /></button>
          <button aria-label="搜索"><SearchIcon /></button>
        </Header>
        <LibrarySelect>
          <Select label="元件库" value="library.ant.design_Mob" $h={22} $size={12} $pad={1} caretRight={5} caret="#000" />
        </LibrarySelect>
        <LibraryBody>
          <LibraryList>
            <Folder $closed>
              <Chevron />
              library.ant.design_Mob
            </Folder>
            <Folder>
              <Chevron open />
              导航
            </Folder>
            <Thumbs>
              <Thumb><BackgroundThumb />背景</Thumb>
              <Thumb><StatusThumb />状态栏</Thumb>
              <Thumb><NavThumb />导航栏</Thumb>
            </Thumbs>
          </LibraryList>
          <VScroll>
            <Arrow turn={0} />
            <Thumbpiece $w={15} $h={9} $margin="7px 0 auto" />
            <Arrow turn={180} />
          </VScroll>
        </LibraryBody>
      </Panel>
      <Panel>
        <Header title="母版"><AddTools /></Header>
      </Panel>
    </LeftDock>
  )
}

/* one mark per 100px of the ruler's current length */
function useMarks(side) {
  const ref = useRef(null)
  const [count, setCount] = useState(0)

  useLayoutEffect(() => {
    const measure = () => setCount(Math.ceil(ref.current[side] / 100))
    measure()
    window.addEventListener("resize", measure)
    return () => window.removeEventListener("resize", measure)
  }, [side])

  return [ref, Array.from({ length: count }, (_, i) => i * 100)]
}

function Canvas() {
  const [topRef, topMarks] = useMarks("clientWidth")
  const [sideRef, sideMarks] = useMarks("clientHeight")

  return (
    <Workspace>
      <TabStrip>
        <PageTab>
          首页
          <Svg w={8} stroke="#aaa" strokeWidth="2"><path d="m1 1 6 6M7 1 1 7" /></Svg>
        </PageTab>
        <Caret w={9} />
      </TabStrip>
      <TopRuler ref={topRef}>
        {topMarks.map((m) => (
          <TopSegment key={m}>{m}</TopSegment>
        ))}
      </TopRuler>
      <CanvasRow>
        <SideRuler ref={sideRef}>
          {sideMarks.map((m) => (
            <SideSegment key={m}><span>{m}</span></SideSegment>
          ))}
        </SideRuler>
        <CanvasColumn>
          <CanvasView>
            <Sheet><div /></Sheet>
            <VScroll>
              <Arrow turn={0} />
              <Thumbpiece $w={15} $h={12} $margin="7px 0 auto" />
              <Arrow turn={180} />
            </VScroll>
          </CanvasView>
          <HScroll>
            <Arrow turn={-90} />
            <Thumbpiece $w={29} $h={15} $margin="0 auto 0 5px">
              <i />
              <i />
              <i />
            </Thumbpiece>
            <Arrow turn={90} />
          </HScroll>
        </CanvasColumn>
      </CanvasRow>
    </Workspace>
  )
}

function Right() {
  return (
    <Inspector>
      <Wide>
        <Header title="检视: 页面" />
        <Tabs>
          <Tab $active>属性</Tab>
          <Tab>说明</Tab>
          <Tab>样式</Tab>
        </Tabs>
        <Interactions>
          <SectionTitle>
            <Chevron open />
            交互
          </SectionTitle>
          <AddCase>
            <PlusIcon />
            <a href="#case">添加用例</a>
          </AddCase>
          <EventList>
            {["页面载入 时", "窗口尺寸改变 时", "窗口滚动 时"].map((name) => (
              <li key={name}>
                <EventIcon />
                {name}
              </li>
            ))}
          </EventList>
          <Select label="更多事件" value="更多事件>>>" $h={22} $size={12} $pad={7} caretRight={15} />
        </Interactions>
        <Adaptive>
          自适应
          <AdaptiveTools>
            <Check>
              <input type="checkbox" />
              启 用
            </Check>
            <button aria-label="自适应视图"><DevicesIcon /></button>
          </AdaptiveTools>
        </Adaptive>
        <Outline>
          <CollapseIcon />
        </Outline>
      </Wide>
      <ImeBar>
        <ImeLogo aria-label="输入法"><SogouLogo /></ImeLogo>
        <ImeTools>
          <ImeButton>中</ImeButton>
          <ImeButton aria-label="标点"><PunctIcon /></ImeButton>
          <ImeButton aria-label="表情"><SmileIcon /></ImeButton>
          <ImeButton aria-label="语音"><MicIcon /></ImeButton>
          <ImeButton aria-label="键盘"><KeyboardIcon /></ImeButton>
          <ImeButton aria-label="账号"><PersonIcon /></ImeButton>
          <ImeButton aria-label="皮肤"><ShirtIcon /></ImeButton>
          <ImeButton aria-label="工具箱"><GridIcon /></ImeButton>
        </ImeTools>
      </ImeBar>
      <Watermark>https://blog.csdn.net/u012877217</Watermark>
    </Inspector>
  )
}

export default function Page() {
  return (
    <App>
      <GlobalStyle />
      <MenuBar>
        {menus.map(([name, key]) => (
          <MenuItem key={name}>
            {name}(<u>{key}</u>)
          </MenuItem>
        ))}
      </MenuBar>
      <MainToolbar />
      <Formatting />
      <Body>
        <Left />
        <Canvas />
        <Right />
      </Body>
    </App>
  )
}
